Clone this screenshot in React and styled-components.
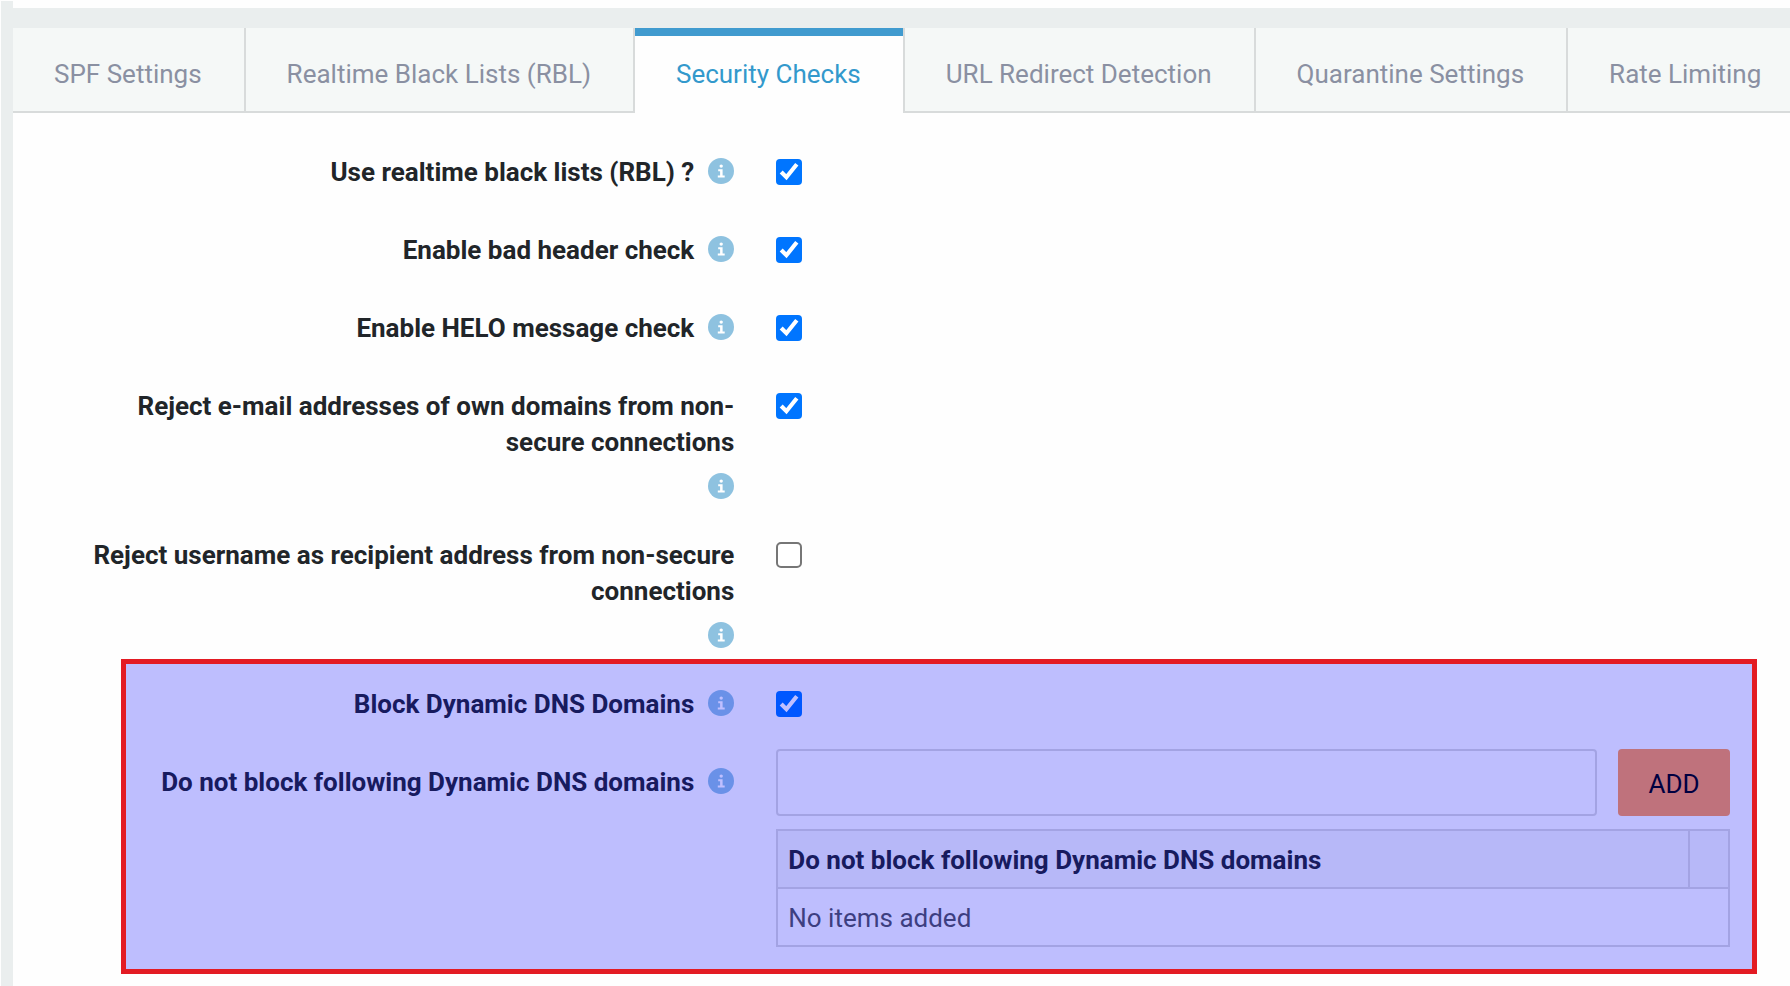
import React, { useState } from "react";
import styled, { createGlobalStyle, css } from "styled-components";

const GlobalStyle = createGlobalStyle`
  * {
    box-sizing: border-box;
  }

  body {
    margin: 0;
    background-color: #fefefe;
    color: #212529;
    font-family: Roboto, "Liberation Sans", sans-serif;
    font-size: 26px;
    line-height: 36px;
  }
`;

const Page = styled.div`
  min-height: calc(100vh - 1px);
  margin: 1px 0 0 1px;
  border-left: 12px solid #eaeeee;
  overflow: hidden;
`;

const Band = styled.div`
  height: 20px;
  margin-top: 7px;
  background-color: #eaeeee;
`;

const Tabs = styled.nav`
  display: flex;
  overflow: hidden;
`;

const Tab = styled.a`
  flex: none;
  height: 85px;
  padding: 28px 42px 19px 41px;
  border-right: 2px solid #d8dbdb;
  border-bottom: 2px solid #d8dbdb;
  background-color: #f5f8f7;
  color: #8a90a2;
  text-decoration: none;
  white-space: nowrap;

  ${(props) =>
    props.$active &&
    css`
      border-bottom: 0;
      background-color: #fefefe;
      box-shadow: inset 0 8px #419bcf;
      color: #3399cc;
    `}
`;

const Form = styled.form`
  display: flex;
  flex-direction: column;
  gap: 12px;
  padding: 26px 60px 40px 71px;
`;

const Row = styled.div`
  display: grid;
  grid-template-columns: minmax(0, 15fr) minmax(0, 22fr);
  column-gap: 42px;
  min-height: 66px;
`;

const LabelCell = styled.div`
  display: flex;
  flex-wrap: wrap;
  align-content: flex-start;
  align-items: flex-start;
  justify-content: flex-end;
  gap: 9px 14px;
  padding: 15px 0 11px;
`;

const Label = styled.label`
  font-weight: 700;
  text-align: right;
`;

const InfoSvg = styled.svg`
  width: 26px;
  height: 26px;
  margin-top: 4px;
`;

const Controls = styled.div`
  display: flex;
  flex-direction: column;
  gap: 13px;
`;

const CheckLine = styled.div`
  display: flex;
  align-items: center;
  height: 66px;
`;

// the native 13px box, drawn at double size
const Checkbox = styled.input`
  width: 13px;
  height: 13px;
  margin: 0;
  zoom: 2;
`;

const AddLine = styled.div`
  display: flex;
  gap: 21px;
`;

const TextInput = styled.input`
  flex: 1;
  min-width: 0;
  height: 67px;
  padding: 0 12px;
  border: 2px solid #dadada;
  border-radius: 4px;
  background-color: #fefefe;
  font: inherit;
`;

const AddButton = styled.button`
  width: 112px;
  height: 67px;
  padding: 2px 0 0;
  border: 0;
  border-radius: 4px;
  background-color: #ff9850;
  color: #000;
  font: inherit;
  cursor: pointer;
`;

const Table = styled.table`
  width: 100%;
  border-collapse: collapse;
  line-height: 36px;
`;

const cell = css`
  height: 58px;
  padding: 10px 10px 8px;
  border: 2px solid #dadada;
  text-align: left;
`;

const Th = styled.th`
  ${cell}
  background-color: #f4f6f6;
  font-weight: 700;
`;

const ActionTh = styled(Th)`
  width: 40px;
`;

const Td = styled.td`
  ${cell}
  color: #525556;
`;

const Marked = styled.div`
  position: relative;
  display: flex;
  flex-direction: column;
  gap: 12px;

  // tinted frame lying over both rows
  &::after {
    content: "";
    position: absolute;
    top: -12px;
    right: -27px;
    bottom: -27px;
    left: 37px;
    border: 5px solid #e31b23;
    background-color: rgba(0, 0, 255, 0.25);
    background-clip: padding-box;
    pointer-events: none;
  }
`;

const tabs = [
  "SPF Settings",
  "Realtime Black Lists (RBL)",
  "Security Checks",
  "URL Redirect Detection",
  "Quarantine Settings",
  "Rate Limiting",
];

const checks = [
  { id: "rbl", label: "Use realtime black lists (RBL) ?", on: true },
  { id: "header", label: "Enable bad header check", on: true },
  { id: "helo", label: "Enable HELO message check", on: true },
  {
    id: "own",
    label: "Reject e-mail addresses of own domains from non-secure connections",
    on: true,
  },
  {
    id: "username",
    label: "Reject username as recipient address from non-secure connections",
    on: false,
  },
];

const InfoIcon = () => (
  <InfoSvg viewBox="0 0 26 26" aria-hidden="true">
    <circle cx="13" cy="13" r="13" fill="#8ec2e0" />
    <circle cx="13.2" cy="8.1" r="1.7" fill="#fff" />
    <path d="M10.2 11.2h4.4v6.2h2.1v2H9.8v-2h2.3v-4.2h-1.9z" fill="#fff" />
  </InfoSvg>
);

const FieldLabel = ({ id, children }) => (
  <LabelCell>
    <Label htmlFor={id}>{children}</Label>
    <InfoIcon />
  </LabelCell>
);

const CheckRow = ({ id, label, on }) => (
  <Row>
    <FieldLabel id={id}>{label}</FieldLabel>
    <CheckLine>
      <Checkbox type="checkbox" id={id} defaultChecked={on} />
    </CheckLine>
  </Row>
);

const App = () => {
  const [active, setActive] = useState("Security Checks");
  const [domain, setDomain] = useState("");
  const [domains, setDomains] = useState([]);

  const handleAdd = () => {
    if (domain.trim()) {
      setDomains([...domains, domain.trim()]);
      setDomain("");
    }
  };

  return (
    <Page>
      <GlobalStyle />
      <Band />
      <Tabs>
        {tabs.map((tab) => (
          <Tab
            key={tab}
            href="#"
            $active={tab === active}
            onClick={() => setActive(tab)}
          >
            {tab}
          </Tab>
        ))}
      </Tabs>
      <Form onSubmit={(e) => e.preventDefault()}>
        {checks.map((check) => (
          <CheckRow key={check.id} {...check} />
        ))}
        <Marked>
          <CheckRow id="ddns" label="Block Dynamic DNS Domains" on />
          <Row>
            <FieldLabel id="domain">
              Do not block following Dynamic DNS domains
            </FieldLabel>
            <Controls>
              <AddLine>
                <TextInput
                  type="text"
                  id="domain"
                  value={domain}
                  onChange={(e) => setDomain(e.target.value)}
                />
                <AddButton type="button" onClick={handleAdd}>
                  ADD
                </AddButton>
              </AddLine>
              <Table>
                <thead>
                  <tr>
                    <Th>Do not block following Dynamic DNS domains</Th>
                    <ActionTh />
                  </tr>
                </thead>
                <tbody>
                  {domains.length === 0 && (
                    <tr>
                      <Td colSpan={2}>No items added</Td>
                    </tr>
                  )}
                  {domains.map((item) => (
                    <tr key={item}>
                      <Td colSpan={2}>{item}</Td>
                    </tr>
                  ))}
                </tbody>
              </Table>
            </Controls>
          </Row>
        </Marked>
      </Form>
    </Page>
  );
};

export default App;
